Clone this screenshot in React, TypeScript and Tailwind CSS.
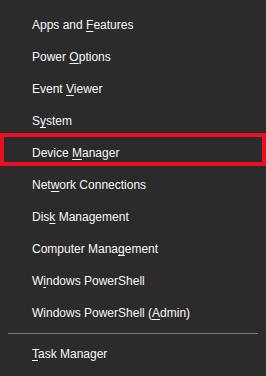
const items: { pre: string; k: string; post: string }[] = [
  { pre: "Apps and ", k: "F", post: "eatures" },
  { pre: "Power ", k: "O", post: "ptions" },
  { pre: "Event ", k: "V", post: "iewer" },
  { pre: "S", k: "y", post: "stem" },
  { pre: "Device ", k: "M", post: "anager" },
  { pre: "Net", k: "w", post: "ork Connections" },
  { pre: "Dis", k: "k", post: " Management" },
  { pre: "Computer Mana", k: "g", post: "ement" },
  { pre: "W", k: "i", post: "ndows PowerShell" },
  { pre: "Windows PowerShell (", k: "A", post: "dmin)" },
];

function Item({ pre, k, post }: { pre: string; k: string; post: string }) {
  return (
    <div className="flex h-8 items-center pl-8 text-[12px] text-[#f7f7f7]">
      <span>
        {pre}
        <span className="underline decoration-1 underline-offset-2">{k}</span>
        {post}
      </span>
    </div>
  );
}

export default function App() {
  return (
    <div
      className="relative h-[376px] w-[266px] overflow-hidden bg-[#2b2b2b] pt-[9px]"
      style={{ fontFamily: '"Liberation Sans", Arial, sans-serif' }}
    >
      {items.map((it) => (
        <Item key={it.pre + it.k} pre={it.pre} k={it.k} post={it.post} />
      ))}
      <div className="mx-2 my-1 h-px bg-[#7a7a7a]" />
      <Item pre="" k="T" post="ask Manager" />
      <div className="pointer-events-none absolute left-0 top-[133px] h-[33px] w-full border-4 border-[#e81123]" />
    </div>
  );
}
